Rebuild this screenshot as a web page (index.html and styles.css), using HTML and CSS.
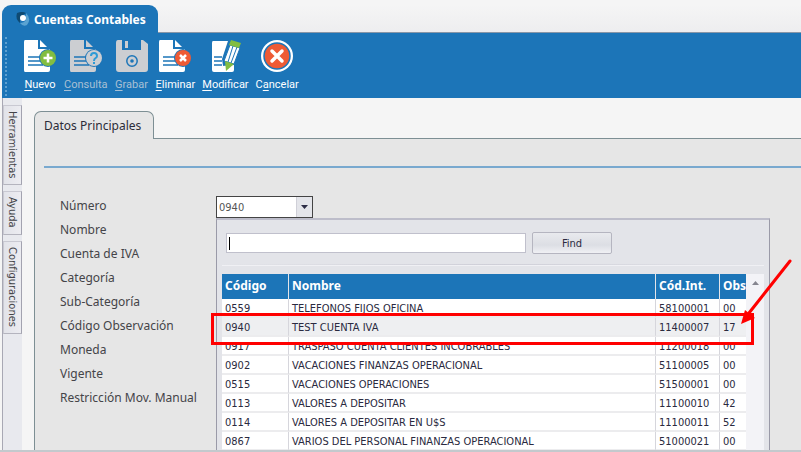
FILE: index.html
```html
<!DOCTYPE html>
<html lang="es">
<head>
  <meta charset="UTF-8" />
  <meta name="viewport" content="width=device-width, initial-scale=1.0" />
  <title>Cuentas Contables</title>
  <link rel="stylesheet" href="styles.css">
</head>
<body>
  <div class="window">
    <!-- Window tab -->
    <header class="window-tabs">
      <h1 class="window-tab">
        <svg width="16" height="16" viewBox="0 0 16 16" aria-hidden="true">
          <path d="M2 2Q7 0 11 2L8 4Q5 5 5 8L5 12Q0 8 2 2Z" fill="#0f4a72" />
          <path d="M11 2Q17 8 12 14Q8 16 5 12Q9 12 11 9Z" fill="#5aa3d2" />
          <circle cx="8" cy="7" r="3" fill="#fff" />
        </svg>
        Cuentas Contables
      </h1>
    </header>

    <!-- Toolbar -->
    <nav class="toolbar">
      <button class="tool">
        <svg width="34" height="34" viewBox="0 0 34 34" aria-hidden="true">
          <path d="M2 1H15V10H27V31Q27 33 25 33H2Q1 33 1 31V3Q1 1 2 1Z" fill="#fff" />
          <path d="M17 1L24 8H17Z" fill="#fff" />
          <path d="M5 18H17M5 22H17M5 26H20" stroke="#1c75b8" stroke-width="1.5" />
          <circle cx="25" cy="19" r="9" fill="#1c75b8" />
          <circle cx="25" cy="19" r="8" fill="#82bd41" />
          <path d="M25 14.500V23.500M20.500 19H29.500" stroke="#fff" stroke-width="2.500" />
        </svg>
        <span><u>N</u>uevo</span>
      </button>
      <button class="tool" disabled>
        <svg width="34" height="34" viewBox="0 0 34 34" aria-hidden="true">
          <path d="M2 1H15V10H27V31Q27 33 25 33H2Q1 33 1 31V3Q1 1 2 1Z" fill="#ccced2" />
          <path d="M17 1L24 8H17Z" fill="#ccced2" />
          <path d="M5 18H17M5 22H17M5 26H20" stroke="#1c75b8" stroke-width="1.5" />
          <circle cx="25" cy="19" r="9" fill="#1c75b8" />
          <circle cx="25" cy="19" r="8" fill="#ccced2" />
          <path d="M22 17Q22 14 25 14T28 17Q28 18.500 26.500 19.200T25 22M25 23V25" fill="none" stroke="#2e9bd6" stroke-width="2" />
        </svg>
        <span><u>C</u>onsulta</span>
      </button>
      <button class="tool" disabled>
        <svg width="34" height="34" viewBox="0 0 34 34" aria-hidden="true">
          <path d="M3 1H7V11H26V1H28L33 5V30Q33 33 30 33H4Q1 33 1 30V4Q1 1 3 1Z" fill="#ccced2" />
          <rect x="10" y="2" width="3" height="7" fill="#ccced2" />
          <circle cx="17" cy="22" r="5.200" fill="none" stroke="#1c75b8" stroke-width="1.500" />
          <circle cx="17" cy="22" r="1.800" fill="#1c75b8" />
        </svg>
        <span><u>G</u>rabar</span>
      </button>
      <button class="tool">
        <svg width="34" height="34" viewBox="0 0 34 34" aria-hidden="true">
          <path d="M2 1H15V10H27V31Q27 33 25 33H2Q1 33 1 31V3Q1 1 2 1Z" fill="#fff" />
          <path d="M17 1L24 8H17Z" fill="#fff" />
          <path d="M5 18H17M5 22H17M5 26H20" stroke="#1c75b8" stroke-width="1.5" />
          <circle cx="25" cy="19" r="9" fill="#1c75b8" />
          <circle cx="25" cy="19" r="8" fill="#ee5b35" />
          <path d="M22 16L28 22M28 16L22 22" stroke="#fff" stroke-width="2.500" />
        </svg>
        <span><u>E</u>liminar</span>
      </button>
      <button class="tool">
        <svg width="34" height="34" viewBox="0 0 34 34" aria-hidden="true">
          <path d="M5 2H20L14 20L16 33H6Q4 33 4 31V4Q4 2 5 2Z" fill="#fff" />
          <path d="M14 27L26 26V31Q26 33 24 33H14Z" fill="#fff" />
          <path d="M6 18H14M6 22H14M6 26H14" stroke="#1c75b8" stroke-width="1.500" />
          <path d="M22 6L32 9L26 25L16 22Z" fill="#fff" stroke="#1c75b8" />
          <path d="M25 7L20 23M29 8L23 24" stroke="#1c75b8" />
          <path d="M23 1L33 4L31 9L21 6Z" fill="#82bd41" />
          <path d="M17 22L26 25L18 32Z" fill="#82bd41" />
        </svg>
        <span><u>M</u>odificar</span>
      </button>
      <button class="tool">
        <svg width="34" height="34" viewBox="0 0 34 34" aria-hidden="true">
          <circle cx="17" cy="17" r="16" fill="#fff" />
          <circle cx="17" cy="17" r="13" fill="#ee5b35" stroke="#1c75b8" stroke-width="1.500" />
          <path d="M12 12L22 22M22 12L12 22" stroke="#fff" stroke-width="3.500" stroke-linecap="round" />
        </svg>
        <span>C<u>a</u>ncelar</span>
      </button>
    </nav>

    <div class="workspace">
      <!-- Side tabs -->
      <aside class="side-tabs">
        <button>Herramientas</button>
        <button>Ayuda</button>
        <button>Configuraciones</button>
      </aside>

      <main class="content">
        <div class="page-tabs">
          <button class="page-tab">Datos Principales</button>
        </div>
        <section class="page">
          <hr class="separator">
          <div class="form">
            <div class="labels">
              <label for="numero">Número</label>
              <span>Nombre</span>
              <span>Cuenta de IVA</span>
              <span>Categoría</span>
              <span>Sub-Categoría</span>
              <span>Código Observación</span>
              <span>Moneda</span>
              <span>Vigente</span>
              <span>Restricción Mov. Manual</span>
            </div>
            <div class="field">
              <div class="combo">
                <input type="text" id="numero" value="0940">
                <button aria-label="Abrir lista">
                  <svg width="7" height="4" viewBox="0 0 7 4" aria-hidden="true"><path d="M0 0H7L3.500 4Z" fill="#2d2d46" /></svg>
                </button>
              </div>

              <!-- Dropdown list of accounts -->
              <div class="popup">
                <div class="search">
                  <input type="text" id="search" aria-label="Buscar">
                  <button>Find</button>
                </div>
                <hr class="groove">
                <div class="results">
                  <table>
                    <thead>
                      <tr><th class="col-code">Código</th><th>Nombre</th><th class="col-int">Cód.Int.</th><th class="col-obs">Obs</th></tr>
                    </thead>
                    <tbody>
                      <tr><td>0559</td><td>TELEFONOS FIJOS OFICINA</td><td>58100001</td><td>00</td></tr>
                      <tr class="selected"><td>0940</td><td>TEST CUENTA IVA</td><td>11400007</td><td>17</td></tr>
                      <tr><td>0917</td><td>TRASPASO CUENTA CLIENTES INCOBRABLES</td><td>11200018</td><td>00</td></tr>
                      <tr><td>0902</td><td>VACACIONES FINANZAS OPERACIONAL</td><td>51100005</td><td>00</td></tr>
                      <tr><td>0515</td><td>VACACIONES OPERACIONES</td><td>51500001</td><td>00</td></tr>
                      <tr><td>0113</td><td>VALORES A DEPOSITAR</td><td>11100010</td><td>42</td></tr>
                      <tr><td>0114</td><td>VALORES A DEPOSITAR EN U$S</td><td>11100011</td><td>52</td></tr>
                      <tr><td>0867</td><td>VARIOS DEL PERSONAL FINANZAS OPERACIONAL</td><td>51000021</td><td>00</td></tr>
                    </tbody>
                  </table>
                  <div class="scrollbar">
                    <svg width="7" height="4" viewBox="0 0 7 4" aria-hidden="true"><path d="M0 4H7L3.500 0Z" fill="#85858f" /></svg>
                  </div>
                  <div class="highlight"></div>
                  <svg class="arrow" width="54" height="68" viewBox="0 0 54 68" aria-hidden="true">
                    <path d="M51 3L10 55" stroke="#f00" stroke-width="3" stroke-linecap="round" />
                    <path d="M2 66L6 52L16 60Z" fill="#f00" />
                  </svg>
                </div>
              </div>
            </div>
          </div>
        </section>
      </main>
    </div>
  </div>
</body>
</html>
```
FILE: styles.css
```css
/* General styles */
* {
  box-sizing: border-box;
}
body {
  margin: 0;
  background-color: #f5f5f5;
  font-family: "Trebuchet MS", "Noto Sans", sans-serif;
  font-size: 12px;
  color: #444448;
}
button,
input {
  font: inherit;
  color: inherit;
  margin: 0;
  padding: 0;
  border: none;
  border-radius: 0;
  background: none;
}
.window {
  display: flex;
  flex-direction: column;
  height: 100vh;
  padding: 5px 0 0 2px;
  border-bottom: 2px solid #c3c9cd;
  overflow: hidden;
}
/* Window tab */
.window-tabs {
  display: flex;
  background: linear-gradient(#f5f5f5, #ededef);
}
.window-tab {
  display: flex;
  align-items: center;
  gap: 3px;
  height: 28px;
  margin: 0;
  padding: 0 12px 0 13px;
  border-radius: 9px 9px 0 0;
  background-color: #1c75b8;
  color: #fff;
  font-size: 12px;
  font-weight: bold;
}
.window-tabs::after {
  content: "";
  flex: 1;
  border-bottom: 1px solid #8796a8;
}
/* Toolbar */
.toolbar {
  display: flex;
  flex: none;
  gap: 7px;
  height: 65px;
  padding: 6px 14px 0 15px;
  border-left: 6px solid #1c75b8;
  background-color: #1c75b8;
  position: relative;
}
.toolbar::before {
  content: "";
  position: absolute;
  left: -3px;
  top: 4px;
  bottom: 2px;
  border-left: 2px dotted #5ea0d0;
}
.tool {
  display: flex;
  flex-direction: column;
  align-items: center;
  gap: 4px;
  color: #fff;
  font-family: Roboto, sans-serif;
  font-size: 11px;
  line-height: 16px;
}
.tool:disabled {
  color: #a9c0d4;
}
.tool u {
  text-underline-offset: 2px;
}
/* Side tabs */
.workspace {
  display: flex;
  flex: 1;
  min-height: 0;
}
.side-tabs {
  display: flex;
  flex-direction: column;
  flex: none;
  gap: 6px;
  width: 20px;
  padding-top: 7px;
  border-left: 1px solid #a8a8b4;
  background-color: #e8e9ee;
}
.side-tabs button {
  writing-mode: vertical-rl;
  padding: 5px 0 6px;
  border: 1px solid #c9c9d2;
  border-right-color: #a3a3b0;
  border-bottom-color: #b4b4be;
  background: linear-gradient(90deg, #e2e3e9, #ececf1);
  font-family: Tahoma, "DejaVu Sans Condensed", "DejaVu Sans", sans-serif;
  font-size: 11px;
  line-height: 17px;
}
/* Page */
.content {
  display: flex;
  flex: 1;
  flex-direction: column;
  min-width: 0;
  padding: 13px 0 0 12px;
}
.page-tabs {
  display: flex;
  flex: none;
}
.page-tabs::after {
  content: "";
  flex: 1;
  border-bottom: 1px solid #7d8f94;
}
.page-tab {
  height: 28px;
  padding: 0 12px 0 9px;
  border: 1px solid #7d8f94;
  border-bottom: none;
  border-radius: 7px 7px 0 0;
  background-color: #e6e6e6;
  color: #2c2c38;
}
.page {
  flex: 1;
  min-height: 0;
  padding: 27px 0 0 9px;
  border-left: 1px solid #7d8f94;
  background-color: #e6e6e6;
}
.separator {
  height: 2px;
  margin: 0 0 28px;
  border: none;
  background-color: #79a9cf;
}
.form {
  display: flex;
  align-items: flex-start;
  padding-left: 16px;
}
.labels {
  display: flex;
  flex: none;
  flex-direction: column;
  width: 156px;
  font-size: 12px;
  line-height: 24px;
  margin-top: -2px;
}
/* Account combo */
.field {
  position: relative;
  flex: 1;
  font-family: Tahoma, "DejaVu Sans Condensed", "DejaVu Sans", sans-serif;
  font-size: 11px;
  color: #2a2a40;
}
.combo {
  display: flex;
  width: 97px;
  height: 22px;
  border: 1px solid #444;
  background-color: #fff;
}
.combo input {
  flex: 1;
  min-width: 0;
  padding-left: 2px;
  color: #555;
}
.combo button {
  display: flex;
  align-items: center;
  justify-content: center;
  width: 16px;
  border-left: 1px solid #d0d0d8;
  background-color: #e4e5ea;
}
.popup {
  position: absolute;
  top: 100%;
  left: 0;
  right: 31px;
  padding: 12px 5px 0;
  border: 1px solid #9a9aa8;
  border-top: 2px solid #bdbdca;
  background-color: #e3e4e9;
}
.search {
  display: flex;
  align-items: center;
  gap: 6px;
  padding-left: 4px;
}
.search input {
  width: 300px;
  height: 20px;
  padding: 0 2px;
  border: 1px solid #c0c0cc;
  background: linear-gradient(#000, #000) 2px center / 1px 13px no-repeat #fff;
  outline: none;
}
.search button {
  width: 80px;
  height: 22px;
  border: 1px solid #b5b5c0;
  border-radius: 2px;
  background: linear-gradient(#e9eaee, #dcdee4 60%, #f0f0f4);
}
.groove {
  height: 2px;
  margin: 10px 0 8px;
  border: none;
  border-bottom: 1px solid #f0f0f4;
  background: linear-gradient(90deg, #e3e4e9, #cfcfd8, #e3e4e9);
}
.results {
  position: relative;
  display: flex;
}
.results table {
  flex: 1;
  width: 100%;
  border-collapse: separate;
  border-spacing: 0;
  table-layout: fixed;
  background-color: #fff;
}
.results th {
  height: 25px;
  padding: 0 3px 2px;
  border-right: 1px solid #e3e4e9;
  background-color: #1c75b8;
  color: #fff;
  font-family: "Trebuchet MS", "Noto Sans", sans-serif;
  font-size: 12px;
  line-height: 16px;
  text-align: left;
}
.results td {
  height: 19px;
  padding: 2px 3px 0;
  border-right: 1px solid #d6d6dc;
  border-bottom: 2px solid #ececee;
  line-height: 15px;
  white-space: nowrap;
}
.results th:last-child,
.results td:last-child {
  border-right: none;
}
.results .selected td {
  background-color: #eeeff1;
}
.col-code {
  width: 67px;
}
.col-int {
  width: 64px;
}
.col-obs {
  width: 26px;
}
.scrollbar {
  display: flex;
  flex: none;
  justify-content: center;
  width: 18px;
  padding-top: 7px;
  background-color: #f3f3f7;
}
/* Marked row and pointer over the table */
.highlight {
  position: absolute;
  top: 39px;
  left: -11px;
  right: 10px;
  height: 32px;
  border: 3px solid #f00;
}
.arrow {
  position: absolute;
  top: -16px;
  right: -29px;
}
```
